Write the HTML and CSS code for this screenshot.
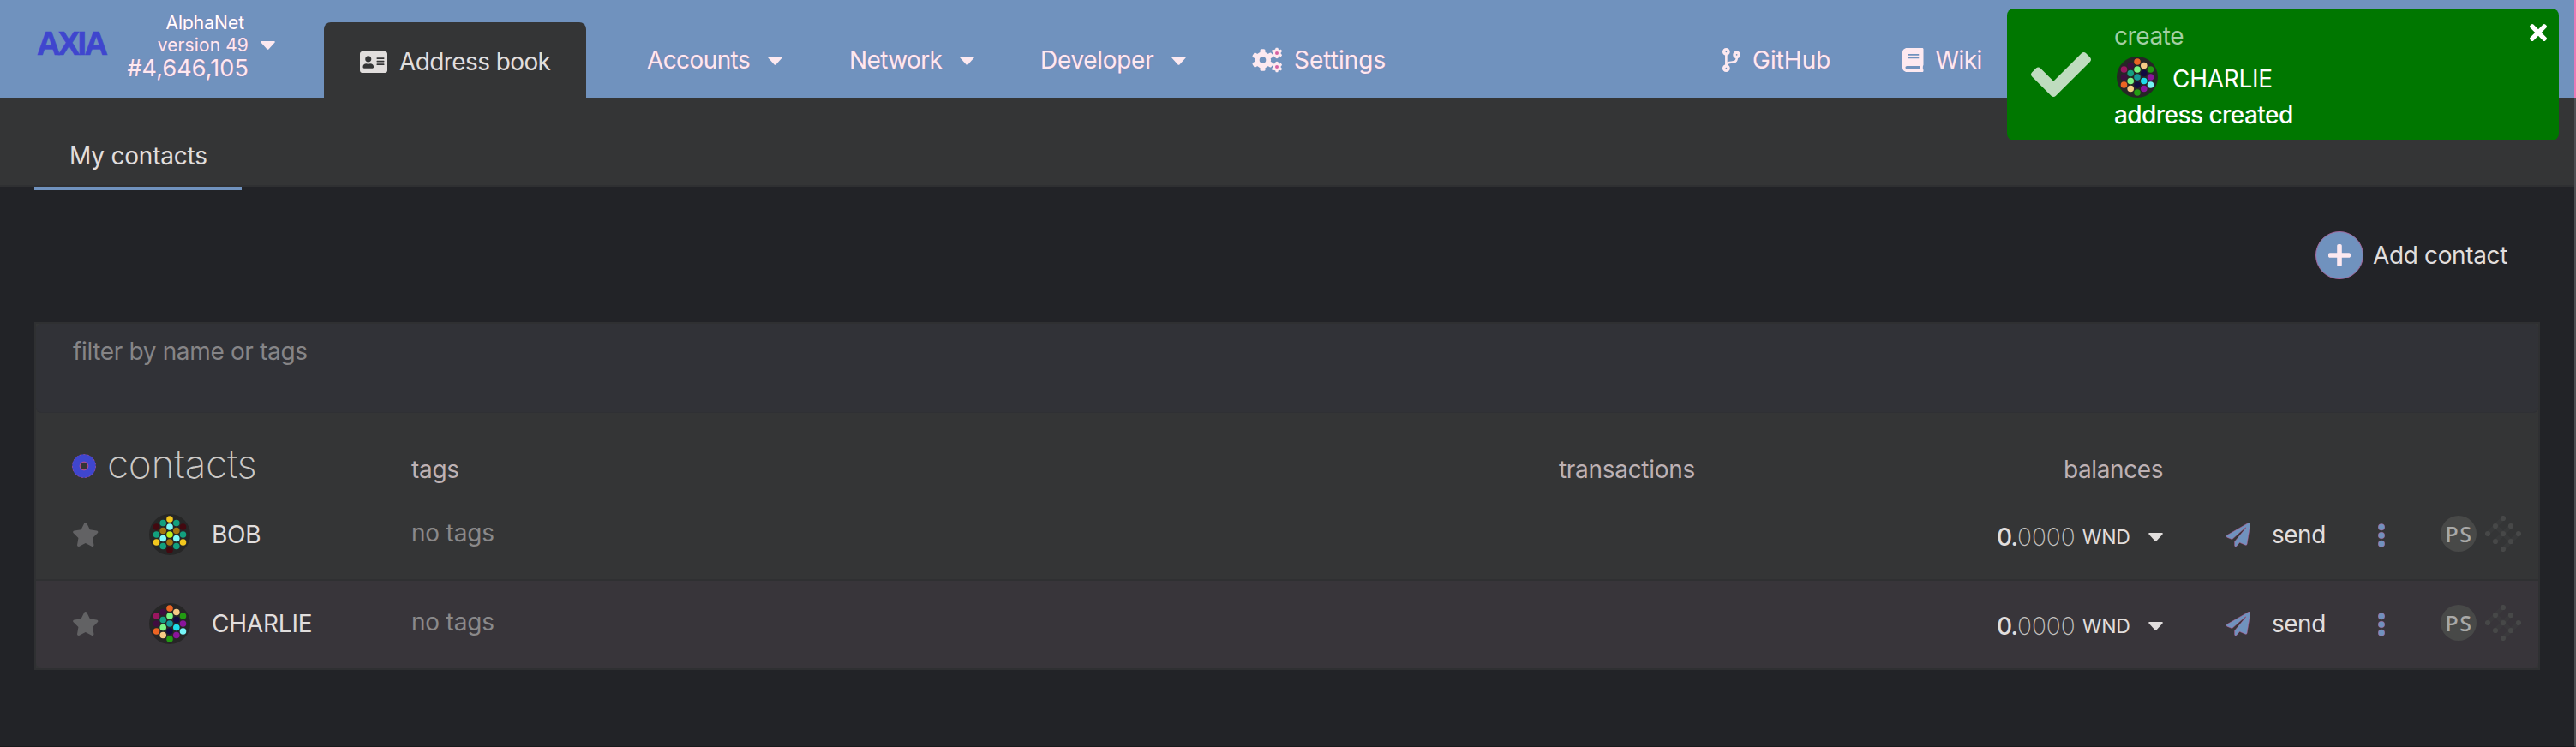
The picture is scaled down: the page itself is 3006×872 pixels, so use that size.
FILE: index.html
```html
<!DOCTYPE html>
<html lang="en">
<head>
<meta charset="utf-8">
<title>Address book</title>
<link rel="stylesheet" href="styles.css">
</head>
<body>
<svg class="defs" aria-hidden="true">
  <symbol id="caret" viewBox="0 0 17 10"><path d="M1.2 0h14.6q1.6.2.6 1.7L9.6 9.3q-1.1 1.1-2.2 0L.6 1.7Q-.4.2 1.2 0z"/></symbol>
  <symbol id="star" viewBox="0 0 576 512"><path d="M259.3 17.8L194 150.2 47.9 171.5c-26.2 3.8-36.7 36.1-17.7 54.6l105.7 103-25 145.5c-4.5 26.3 23.2 46 46.4 33.7L288 439.6l130.7 68.7c23.2 12.2 50.9-7.4 46.4-33.7l-25-145.5 105.7-103c19-18.5 8.5-50.8-17.7-54.6L382 150.2 316.7 17.8c-11.7-23.6-45.6-23.9-57.4 0z"/></symbol>
  <symbol id="plane" viewBox="0 0 512 512"><path d="M476 3.2L12.5 270.6c-18.1 10.4-15.8 35.6 2.2 43.2L121 358.4l287.3-253.2c5.5-4.9 13.3 2.6 8.6 8.3L176 407v80.5c0 23.6 28.5 32.9 42.5 15.8L282 426l124.6 52.2c14.2 6 30.4-2.9 33-18.2l72-432C515 7.8 493.3-6.8 476 3.2z"/></symbol>
  <symbol id="kebab" viewBox="0 0 8 28"><circle cx="4" cy="4.3" r="3.8"/><circle cx="4" cy="14" r="3.8"/><circle cx="4" cy="23.7" r="3.8"/></symbol>
  <symbol id="lattice" viewBox="0 0 42 42">
    <g stroke="#3e3f40" stroke-width="5" stroke-linecap="round" opacity=".45"><path d="M3 21 21 3M21 39 39 21M12 30 30 12M12 12 30 30"/></g>
    <g fill="#474848"><circle cx="21" cy="3" r="3.1"/><circle cx="12" cy="12" r="3.1"/><circle cx="30" cy="12" r="3.1"/><circle cx="3" cy="21" r="3.1"/><circle cx="21" cy="21" r="3.1"/><circle cx="39" cy="21" r="3.1"/><circle cx="12" cy="30" r="3.1"/><circle cx="30" cy="30" r="3.1"/><circle cx="21" cy="39" r="3.1"/></g>
  </symbol>
  <symbol id="bob" viewBox="0 0 48 48">
    <circle cx="24" cy="24" r="24" fill="#262626"/>
    <g fill="#f3c81e"><circle cx="24" cy="6" r="3.8"/><circle cx="8.5" cy="33" r="3.8"/><circle cx="39.5" cy="33" r="3.8"/></g>
    <g fill="#7ffbf9"><circle cx="24" cy="15" r="3.8"/><circle cx="16.2" cy="28.5" r="3.8"/><circle cx="31.8" cy="28.5" r="3.8"/></g>
    <circle cx="24" cy="24" r="3.8" fill="#bdf017"/>
    <g fill="#a3760f"><circle cx="24" cy="33" r="3.8"/><circle cx="16.2" cy="19.5" r="3.8"/><circle cx="31.8" cy="19.5" r="3.8"/></g>
    <g fill="#430910"><circle cx="24" cy="42" r="3.8"/><circle cx="8.5" cy="15" r="3.8"/><circle cx="39.5" cy="15" r="3.8"/></g>
    <g fill="#12a07e"><circle cx="16.2" cy="10.5" r="3.8"/><circle cx="31.8" cy="10.5" r="3.8"/><circle cx="8.5" cy="24" r="3.8"/><circle cx="39.5" cy="24" r="3.8"/><circle cx="16.2" cy="37.5" r="3.8"/><circle cx="31.8" cy="37.5" r="3.8"/></g>
  </symbol>
  <symbol id="charlie" viewBox="0 0 48 48">
    <circle cx="24" cy="24" r="24" fill="#262626"/>
    <g fill="#ec6423"><circle cx="24" cy="6" r="3.8"/><circle cx="8.5" cy="33" r="3.8"/></g>
    <g fill="#7af584"><circle cx="24" cy="15" r="3.8"/><circle cx="16.2" cy="28.5" r="3.8"/></g>
    <circle cx="24" cy="24" r="3.8" fill="#149a9a"/>
    <circle cx="16.2" cy="19.5" r="3.8" fill="#14a082"/>
    <g fill="#120a40"><circle cx="24" cy="33" r="3.8"/><circle cx="31.8" cy="19.5" r="3.8"/></g>
    <g fill="#229c12"><circle cx="24" cy="42" r="3.8"/><circle cx="39.5" cy="15" r="3.8"/></g>
    <g fill="#3f0d40"><circle cx="16.2" cy="10.5" r="3.8"/><circle cx="8.5" cy="24" r="3.8"/></g>
    <g fill="#f5cb86"><circle cx="16.2" cy="37.5" r="3.8"/><circle cx="31.8" cy="10.5" r="3.8"/></g>
    <circle cx="31.8" cy="28.5" r="3.8" fill="#1fdcea"/>
    <g fill="#8a159a"><circle cx="31.8" cy="37.5" r="3.8"/><circle cx="39.5" cy="24" r="3.8"/></g>
    <circle cx="8.5" cy="15" r="3.8" fill="#9b1660"/>
    <circle cx="39.5" cy="33" r="3.8" fill="#76f5f7"/>
  </symbol>
  <symbol id="gear" viewBox="-13 -13 26 26">
    <rect x="-3" y="-12.8" width="6" height="25.6" rx="1.6"/><rect x="-3" y="-12.8" width="6" height="25.6" rx="1.6" transform="rotate(60)"/><rect x="-3" y="-12.8" width="6" height="25.6" rx="1.6" transform="rotate(120)"/>
    <circle r="9.6"/>
  </symbol>
</svg>
<div class="page">
  <header class="topbar">
    <div class="brand">
      <span class="logo">AXIA</span>
      <span class="chain">
        <span class="chain-name">AlphaNet</span>
        <span class="chain-version">version 49</span>
        <span class="chain-block">#4,646,105</span>
      </span>
      <svg class="caret"><use href="#caret"/></svg>
    </div>
    <a class="nav-active">
      <svg class="icon-card" viewBox="0 32 576 448" preserveAspectRatio="none"><path d="M528 32H48C21.500 32 0 53.500 0 80v352c0 26.500 21.500 48 48 48h480c26.500 0 48-21.500 48-48V80c0-26.500-21.500-48-48-48zm-352 96c35.300 0 64 28.700 64 64s-28.700 64-64 64-64-28.700-64-64 28.700-64 64-64zm112 236.800c0 10.600-10 19.200-22.400 19.200H86.400C74 384 64 375.400 64 364.800v-19.200c0-31.800 30.100-57.600 67.200-57.600h5c12.300 5.100 25.700 8 39.800 8s27.600-2.900 39.800-8h5c37.100 0 67.200 25.800 67.200 57.600v19.200zM512 312c0 4.400-3.600 8-8 8H360c-4.400 0-8-3.600-8-8v-16c0-4.400 3.600-8 8-8h144c4.400 0 8 3.600 8 8v16zm0-64c0 4.400-3.600 8-8 8H360c-4.400 0-8-3.600-8-8v-16c0-4.400 3.600-8 8-8h144c4.400 0 8 3.600 8 8v16zm0-64c0 4.400-3.600 8-8 8H360c-4.400 0-8-3.600-8-8v-16c0-4.400 3.600-8 8-8h144c4.400 0 8 3.600 8 8v16z"/></svg>
      <span class="tight">Address book</span>
    </a>
    <a class="nav-item menu"><span class="tight">Accounts</span><svg class="caret"><use href="#caret"/></svg></a>
    <a class="nav-item menu"><span class="tight">Network</span><svg class="caret"><use href="#caret"/></svg></a>
    <a class="nav-item menu"><span class="snug">Developer</span><svg class="caret"><use href="#caret"/></svg></a>
    <a class="nav-item settings">
      <svg class="icon-gears" viewBox="0 0 35 28"><use href="#gear" x="-1.500" y="1" width="26" height="26"/><circle cx="11.500" cy="14" r="3.800" class="hole"/><use href="#gear" x="21.500" y="-.6" width="13" height="13"/><circle cx="28" cy="5.900" r="2" class="hole-pink"/><use href="#gear" x="21.500" y="15.600" width="13" height="13"/><circle cx="28" cy="22.100" r="2" class="hole-pink"/></svg>
      <span>Settings</span>
    </a>
    <a class="nav-item link">
      <svg class="icon-branch" viewBox="0 0 384 512"><path d="M384 144c0-44.200-35.800-80-80-80s-80 35.800-80 80c0 36.400 24.300 67.100 57.500 76.800-.6 16.100-4.200 28.500-11 36.900-15.400 19.200-49.300 22.400-85.200 25.700-28.200 2.600-57.400 5.400-81.300 16.900v-144c32.500-10.200 56-40.500 56-76.300 0-44.200-35.800-80-80-80S0 35.800 0 80c0 35.800 23.500 66.100 56 76.300v199.300C23.500 365.900 0 396.200 0 432c0 44.200 35.800 80 80 80s80-35.800 80-80c0-34-21.200-63.100-51.200-74.600 3.100-5.200 7.800-9.800 14.900-13.400 16.200-8.200 40.400-10.400 66.100-12.800 42.200-3.900 90-8.400 118.200-43.400 14-17.400 21.100-39.800 21.600-67.900 31.600-10.800 54.400-40.700 54.400-75.900zM80 64c8.800 0 16 7.200 16 16s-7.200 16-16 16-16-7.200-16-16 7.200-16 16-16zm0 384c-8.800 0-16-7.200-16-16s7.200-16 16-16 16 7.200 16 16-7.200 16-16 16zm224-320c8.800 0 16 7.200 16 16s-7.200 16-16 16-16-7.200-16-16 7.200-16 16-16z"/></svg>
      <span>GitHub</span>
    </a>
    <a class="nav-item link">
      <svg class="icon-book" viewBox="0 0 448 512"><path d="M448 360V24c0-13.300-10.700-24-24-24H96C43 0 0 43 0 96v320c0 53 43 96 96 96h328c13.300 0 24-10.700 24-24v-16c0-7.500-3.500-14.300-8.900-18.700-4.200-15.400-4.200-59.300 0-74.700 5.400-4.300 8.900-11.100 8.900-18.600zM128 134c0-3.300 2.700-6 6-6h212c3.300 0 6 2.700 6 6v20c0 3.300-2.700 6-6 6H134c-3.300 0-6-2.700-6-6v-20zm0 64c0-3.300 2.700-6 6-6h212c3.300 0 6 2.700 6 6v20c0 3.300-2.700 6-6 6H134c-3.300 0-6-2.700-6-6v-20zm253.400 250H96c-17.700 0-32-14.300-32-32 0-17.600 14.400-32 32-32h285.400c-1.900 17.100-1.900 46.900 0 64z"/></svg>
      <span class="tight">Wiki</span>
    </a>
  </header>

  <nav class="subtabs"><a class="subtab">My contacts</a></nav>

  <div class="actions">
    <button class="add"><span class="add-icon"><svg viewBox="0 32 448 448"><path d="M416 208H272V64c0-17.670-14.330-32-32-32h-32c-17.670 0-32 14.330-32 32v144H32c-17.670 0-32 14.330-32 32v32c0 17.670 14.330 32 32 32h144v144c0 17.670 14.330 32 32 32h32c17.670 0 32-14.330 32-32V304h144c17.670 0 32-14.330 32-32v-32c0-17.670-14.330-32-32-32z"/></svg></span><span class="add-label">Add contact</span></button>
  </div>

  <main class="table">
    <div class="filter">filter by name or tags</div>
    <div class="head">
      <svg class="ring" viewBox="0 0 28 28"><circle cx="14" cy="14" r="9.300" fill="none" stroke="#3f46ce" stroke-width="9"/><circle cx="14" cy="14" r="13.600" fill="none" stroke="#c4508e" stroke-width=".6" stroke-dasharray="2 2.500"/><circle cx="14" cy="14" r="4.800" fill="none" stroke="#e0559a" stroke-width=".8"/></svg>
      <h1 class="title">contacts</h1>
      <span class="col">tags</span>
      <span class="col">transactions</span>
      <span class="col balances">balances</span>
    </div>
    <div class="row">
      <svg class="star"><use href="#star"/></svg>
      <svg class="avatar"><use href="#bob"/></svg>
      <span class="name">BOB</span>
      <span class="notags">no tags</span>
      <span class="balance"><span class="int">0.</span><span class="dec">0000</span><span class="unit">WND</span><svg class="caret"><use href="#caret"/></svg></span>
      <span class="send"><svg class="plane"><use href="#plane"/></svg>send</span>
      <svg class="kebab"><use href="#kebab"/></svg>
      <span class="ps">PS</span>
      <svg class="lattice"><use href="#lattice"/></svg>
    </div>
    <div class="row alt">
      <svg class="star"><use href="#star"/></svg>
      <svg class="avatar"><use href="#charlie"/></svg>
      <span class="name">CHARLIE</span>
      <span class="notags">no tags</span>
      <span class="balance"><span class="int">0.</span><span class="dec">0000</span><span class="unit">WND</span><svg class="caret"><use href="#caret"/></svg></span>
      <span class="send"><svg class="plane"><use href="#plane"/></svg>send</span>
      <svg class="kebab"><use href="#kebab"/></svg>
      <span class="ps">PS</span>
      <svg class="lattice"><use href="#lattice"/></svg>
    </div>
  </main>

  <aside class="toast">
    <svg class="toast-check" viewBox="0 65 512 382" preserveAspectRatio="none"><path d="M173.898 439.404l-166.400-166.400c-9.997-9.997-9.997-26.206 0-36.204l36.203-36.204c9.997-9.998 26.207-9.998 36.204 0L192 312.690 432.095 72.596c9.997-9.997 26.207-9.997 36.204 0l36.203 36.204c9.997 9.997 9.997 26.206 0 36.204l-294.400 294.401c-9.998 9.997-26.207 9.997-36.204-.001z"/></svg>
    <div class="toast-body">
      <span class="toast-action">create</span>
      <span class="toast-who"><svg class="avatar"><use href="#charlie"/></svg><span class="snug">CHARLIE</span></span>
      <span class="toast-status">address created</span>
    </div>
    <svg class="toast-close" viewBox="0 80 352 352"><path d="M242.720 256l100.070-100.070c12.280-12.280 12.280-32.190 0-44.480l-22.240-22.240c-12.280-12.280-32.190-12.280-44.480 0L176 189.280 75.930 89.210c-12.280-12.280-32.190-12.280-44.480 0L9.210 111.450c-12.280 12.280-12.280 32.190 0 44.480L109.280 256 9.210 356.070c-12.280 12.280-12.280 32.190 0 44.480l22.240 22.240c12.280 12.280 32.200 12.280 44.480 0L176 322.720l100.070 100.070c12.280 12.280 32.200 12.280 44.480 0l22.240-22.240c12.280-12.280 12.280-32.190 0-44.480L242.720 256z"/></svg>
  </aside>
</div>
</body>
</html>
```
FILE: styles.css
```css
* { box-sizing: border-box; }
body {
  margin: 0;
  background: #222327;
  font: 400 28px/28px Inter, "Liberation Sans", sans-serif;
  color: #e1dedd;
  overflow: hidden;
}
svg { display: block; fill: currentColor; flex: none; }
span { white-space: nowrap; }
.defs { position: absolute; width: 0; height: 0; }
.page {
  position: relative;
  height: 872px;
  border-right: 2px solid #4e4f52;
  border-bottom: 1px solid #18191b;
}
.tight { letter-spacing: -0.6px; }
.snug { letter-spacing: -0.3px; }
.caret { width: 17px; height: 10px; }

/* top bar */
.topbar {
  display: grid;
  grid-template-columns: 378px 377px 236px 223px 248px 548px 210px 1fr;
  align-items: start;
  height: 114px;
  margin-right: -2px;
  border-right: 2px solid #ec79b5;
  background: #7092be;
  color: #fde9f0;
}
.brand { display: flex; align-items: flex-start; padding-left: 43px; }
.logo {
  width: 90px;
  margin-top: 32px;
  font: 700 38px/38px "Liberation Sans", Arial, sans-serif;
  letter-spacing: -2.6px;
  color: #3f46ce;
  -webkit-text-stroke: .7px #3f46ce;
}
.chain {
  display: flex;
  flex-direction: column;
  align-items: flex-end;
  width: 157px;
  padding-top: 16px;
  text-shadow: 0 0 1px rgba(222, 88, 155, .7);
}
.chain-name {
  margin: 0 5px 4px 0;
  font-size: 21px;
  line-height: 22px;
  color: #fff;
  clip-path: inset(0 0 3px);
}
.chain-version { font-size: 21px; line-height: 21px; letter-spacing: .1px; }
.chain-block { margin-top: 3px; font-size: 27px; line-height: 28px; letter-spacing: .1px; }
.brand .caret { margin: 48px 0 0 14px; }
.nav-active {
  display: flex;
  align-items: center;
  gap: 14px;
  width: 306px;
  height: 88px;
  margin-top: 26px;
  padding: 4px 0 0 42px;
  border-radius: 8px 8px 0 0;
  background: #343536;
  color: #e1dedd;
}
.icon-card { width: 32px; height: 25px; }
.nav-item {
  display: flex;
  align-items: center;
  height: 28px;
  margin-top: 56px;
  text-shadow: 0 0 1px rgba(222, 88, 155, .7);
}
.menu { gap: 21px; }
.menu .caret { margin-top: 2px; }
.settings { gap: 13px; }
.link { gap: 15px; }
.icon-gears { width: 35px; height: 28px; overflow: visible; }
.hole { fill: #7092be; }
.hole-pink { fill: #d662a3; }
.icon-branch { width: 21px; height: 28px; margin-right: -1px; }
.icon-book { width: 24.500px; height: 28px; margin-right: -1px; }

/* sub tabs */
.subtabs { height: 104px; padding-left: 40px; background: #343536; border-bottom: 2px solid #2f3032; }
.subtab {
  display: block;
  position: relative;
  width: 242px;
  height: 108px;
  padding: 54px 0 0 41px;
  border-bottom: 4px solid #7092be;
  letter-spacing: -.2px;
}

/* add button */
.actions { display: flex; justify-content: flex-end; height: 158px; padding: 52px 78px 0 0; }
.add {
  display: flex;
  align-items: center;
  gap: 11px;
  height: 56px;
  padding: 0;
  border: 0;
  background: none;
  color: inherit;
  font: inherit;
}
.add-icon {
  display: grid;
  place-items: center;
  width: 56px;
  height: 56px;
  border: 1px solid #a4699f;
  border-radius: 50%;
  background: #7092be;
  color: #fde9f0;
}
.add-icon svg { width: 26px; height: 26px; }
.add-label { letter-spacing: -.36px; }

/* contacts table */
.table { margin: 0 40px; border: 2px solid #2f3032; background: #343536; }
.filter {
  height: 104px;
  padding: 18px 0 0 43px;
  border-bottom: 1px solid #2f3034;
  border-radius: 6px;
  background: #313237;
  color: #868587;
  letter-spacing: -.35px;
}
.head {
  display: grid;
  grid-template-columns: 41px 355px 1339px 589px 1fr;
  height: 92px;
  padding-left: 42px;
}
.ring { width: 28px; height: 28px; margin-top: 48px; }
.title { margin: 36px 0 0; font-size: 46px; line-height: 46px; font-weight: 200; letter-spacing: -.3px; color: #cbc9c7; }
.col { margin-top: 52px; letter-spacing: -.3px; color: #bdb1b4; }
.balances { letter-spacing: -.4px; }
.row {
  display: grid;
  grid-template-columns: 90px 73px 233px 1850px 268px 177px 73px 52px 42px;
  align-items: center;
  height: 104px;
  padding: 0 0 2px 42px;
  border-bottom: 2px solid #2f3032;
}
.alt { height: 102px; border-bottom: 0; background: #38353a; border-radius: 0 0 6px 6px; }
.star { width: 31.500px; height: 28px; color: #626264; }
.avatar { width: 48px; height: 48px; }
.name { letter-spacing: -.2px; }
.notags { margin-bottom: 4px; letter-spacing: -.2px; color: #8a898a; }
.balance { display: flex; align-items: center; margin-top: 5px; }
.int { font-weight: 500; letter-spacing: -.9px; }
.dec { font-weight: 200; color: #c3c1bf; }
.unit { margin: 1px 21px 0 8px; font-size: 23px; letter-spacing: -.2px; }
.send { display: flex; align-items: center; gap: 25px; letter-spacing: -.5px; }
.plane { width: 28px; height: 28px; color: #7092be; stroke: #c85f9e; stroke-width: 9px; }
.kebab { width: 8px; height: 28px; margin-top: 2px; color: #7092be; stroke: #c85f9e; stroke-width: .4px; }
.ps {
  width: 42px;
  height: 42px;
  margin-bottom: 2px;
  padding-left: 1px;
  border-radius: 50%;
  background: #484948;
  color: #a9a9a8;
  font: 500 25px/42px "Noto Sans", sans-serif;
  text-align: center;
  letter-spacing: 1.6px;
}
.lattice { width: 42px; height: 42px; margin-bottom: 2px; }

/* toast */
.toast {
  position: absolute;
  top: 10px;
  left: 2342px;
  display: flex;
  width: 644px;
  height: 154px;
  padding-left: 28px;
  border-radius: 8px;
  background: #007700;
  color: #fff;
}
.toast-check { width: 70px; height: 52px; margin-top: 51px; color: #bfdcbf; }
.toast-body { display: flex; flex-direction: column; width: 512px; padding: 18px 0 0 27px; }
.toast-action { color: #a3cfa3; letter-spacing: -.4px; }
.toast-who { display: flex; align-items: center; gap: 17px; height: 48px; margin: 10px 0 6px 3px; }
.toast-who .snug { margin-top: 4px; }
.toast-status { font-weight: 500; letter-spacing: -.55px; }
.toast-close { width: 20px; height: 20px; margin-top: 18px; }
```
